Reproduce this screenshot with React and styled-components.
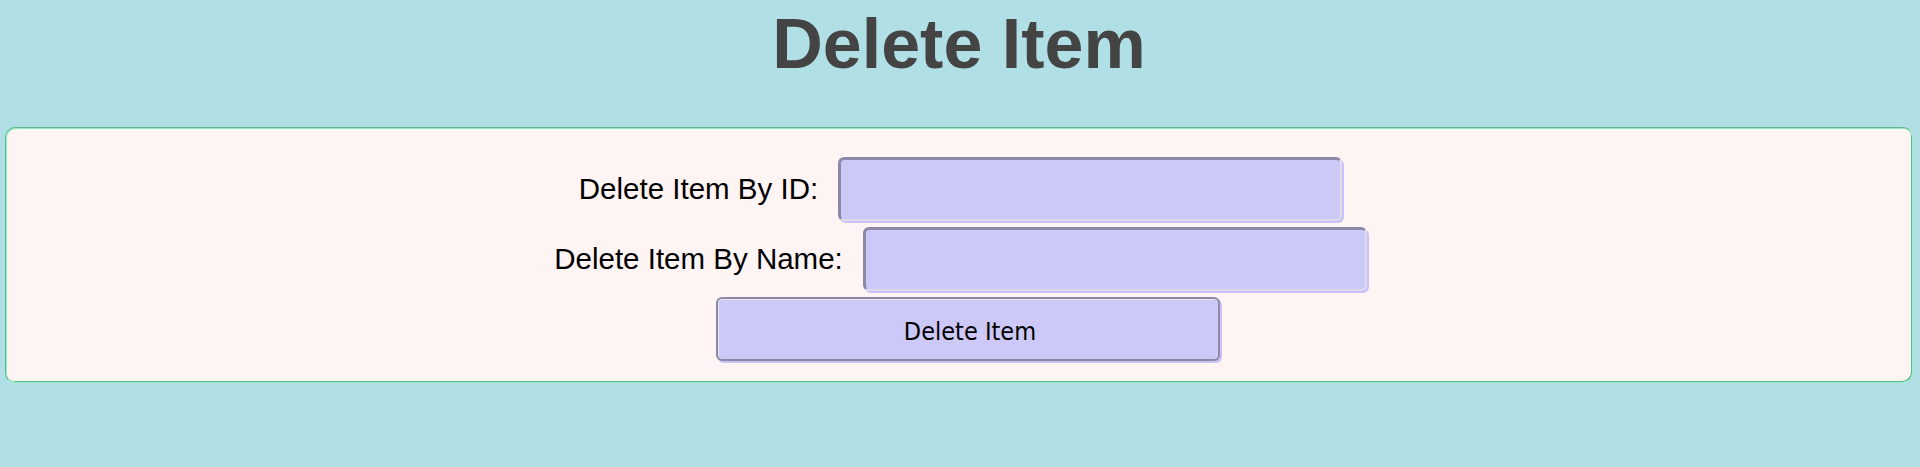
import React from "react";
import styled, { createGlobalStyle } from "styled-components";

const GlobalStyle = createGlobalStyle`
  html, body {
    margin: 0;
    padding: 0;
    background: #b0e0e6;
  }
  body {
    font-family: "Liberation Sans", Arial, sans-serif;
  }
`;

const Page = styled.div`
  display: flex;
  flex-direction: column;
  padding: 0 7px 0 5px;
`;

const Title = styled.h1`
  margin: 4px 0 43px;
  text-align: center;
  font-family: "Liberation Sans", Arial, sans-serif;
  font-weight: 700;
  font-size: 70px;
  color: #444444;
`;

const Card = styled.form`
  display: flex;
  flex-direction: column;
  align-items: center;
  gap: 6px;
  height: 256px;
  box-sizing: border-box;
  padding: 29px 0 0;
  background: #fff4f4;
  border-radius: 10px;
  border: 1px solid;
  border-color: #5cb98d #93eec4 #93eec4 #5cb98d;
  box-shadow: inset 1px 1px 0 #93eec4, inset -1px -1px 0 #5cb98d;
`;

const Row = styled.div`
  display: flex;
  align-items: center;
  gap: 20px;
  margin-left: 3px;
`;

const Label = styled.label`
  font-family: "Liberation Sans", Arial, sans-serif;
  font-size: 29.5px;
  color: #000;
`;

const Field = styled.input`
  box-sizing: border-box;
  width: 504px;
  height: 64px;
  margin: 0;
  padding: 0 8px;
  background: #ccc8f8;
  border-style: solid;
  border-width: 3px 2px 2px 3px;
  border-color: #8b88a8 #dcdcec #dcdcec #8b88a8;
  border-radius: 6px;
  box-shadow: 2px 2px 0 0 #c9c1f7;
  font-size: 24px;
  outline: none;
`;

const Button = styled.button`
  box-sizing: border-box;
  width: 504px;
  height: 64px;
  margin: 0 0 0 18px;
  padding: 4px 0 0 4px;
  background: #ccc8f8;
  border: 2px solid #8c89a6;
  border-radius: 6px;
  box-shadow: inset 1px 1px 0 #e6e6f2, 2px 2px 0 0 #c9c1f7;
  font-family: "DejaVu Sans Condensed", "DejaVu Sans", sans-serif;
  font-stretch: condensed;
  font-size: 25px;
  color: #000;
  cursor: pointer;
`;

export default function App() {
  return (
    <>
      <GlobalStyle />
      <Page>
        <Title>Delete Item</Title>
        <Card onSubmit={(e) => e.preventDefault()}>
          <Row>
            <Label htmlFor="del-id">Delete Item By ID:</Label>
            <Field id="del-id" type="text" />
          </Row>
          <Row>
            <Label htmlFor="del-name">Delete Item By Name:</Label>
            <Field id="del-name" type="text" />
          </Row>
          <Button type="submit">Delete Item</Button>
        </Card>
      </Page>
    </>
  );
}
